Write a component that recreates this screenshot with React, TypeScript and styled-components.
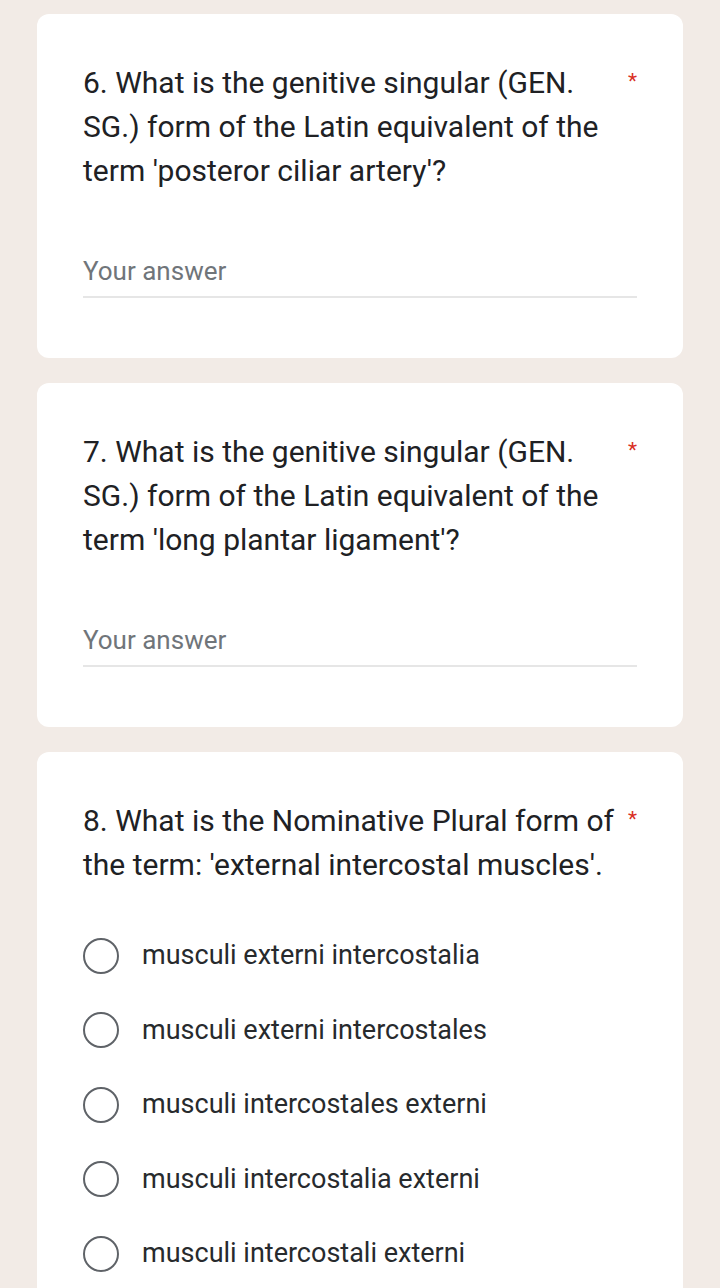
import React from "react";
import styled, { createGlobalStyle } from "styled-components";

const GlobalStyle = createGlobalStyle`
  body {
    margin: 0;
    background: #f2ebe6;
    font-family: Roboto, "Liberation Sans", Arial, sans-serif;
  }
`;

const Page = styled.div`
  display: flex;
  flex-direction: column;
  gap: 25px;
  padding: 14px 37px 0;
  height: 1288px;
  box-sizing: border-box;
  overflow: hidden;
`;

const Card = styled.div`
  background: #ffffff;
  border-radius: 12px;
  padding: 47px 46px 60px;
  flex-shrink: 0;
`;

const QuestionRow = styled.div`
  display: flex;
  align-items: flex-start;
`;

const QuestionText = styled.div`
  flex: 1;
  font-size: 30px;
  line-height: 44px;
  color: #202124;
`;

const Required = styled.span`
  width: 17px;
  text-align: right;
  color: #d93025;
  font-size: 21px;
  line-height: 40px;
`;

const AnswerField = styled.div`
  margin-top: 63px;
  padding-bottom: 10px;
  border-bottom: 2px solid #e6e6e6;
  font-size: 26px;
  line-height: 30px;
  color: #70757a;
`;

const Options = styled.div`
  display: flex;
  flex-direction: column;
  gap: 37.5px;
  margin-top: 50px;
`;

const Option = styled.label`
  display: flex;
  align-items: center;
  gap: 23px;
  font-size: 27px;
  line-height: 37px;
  color: #272a2d;
`;

const Radio = styled.span`
  width: 32px;
  height: 32px;
  border: 2.5px solid #5f6368;
  border-radius: 50%;
  flex-shrink: 0;
`;

const TextQuestion: React.FC<{ text: string }> = ({ text }) => (
  <Card>
    <QuestionRow>
      <QuestionText>{text}</QuestionText>
      <Required>*</Required>
    </QuestionRow>
    <AnswerField>Your answer</AnswerField>
  </Card>
);

const options = [
  "musculi externi intercostalia",
  "musculi externi intercostales",
  "musculi intercostales externi",
  "musculi intercostalia externi",
  "musculi intercostali externi",
];

export default function App() {
  return (
    <>
      <GlobalStyle />
      <Page>
        <TextQuestion text="6. What is the genitive singular (GEN. SG.) form of the Latin equivalent of the term 'posteror ciliar artery'?" />
        <TextQuestion text="7. What is the genitive singular (GEN. SG.) form of the Latin equivalent of the term 'long plantar ligament'?" />
        <Card>
          <QuestionRow>
            <QuestionText>
              8. What is the Nominative Plural form of the term: 'external
              intercostal muscles'.
            </QuestionText>
            <Required>*</Required>
          </QuestionRow>
          <Options>
            {options.map((o) => (
              <Option key={o}>
                <Radio />
                {o}
              </Option>
            ))}
          </Options>
        </Card>
      </Page>
    </>
  );
}
